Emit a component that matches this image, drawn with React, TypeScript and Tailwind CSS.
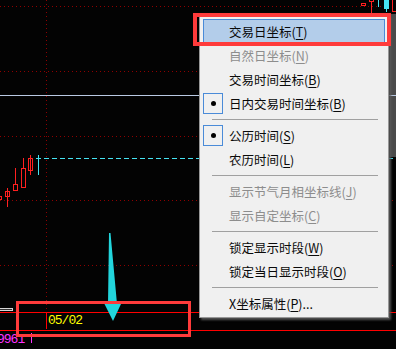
import React from 'react';

type MenuEntry =
  | { sep: true }
  | { sep?: false; label: string; key: string; tail?: string; disabled?: boolean; checked?: boolean; active?: boolean };

const entries: MenuEntry[] = [
  { label: '交易日坐标', key: 'T', active: true },
  { label: '自然日坐标', key: 'N', disabled: true },
  { label: '交易时间坐标', key: 'B' },
  { label: '日内交易时间坐标', key: 'B', checked: true },
  { sep: true },
  { label: '公历时间', key: 'S', checked: true },
  { label: '农历时间', key: 'L' },
  { sep: true },
  { label: '显示节气月相坐标线', key: 'J', disabled: true },
  { label: '显示自定坐标', key: 'C', disabled: true },
  { sep: true },
  { label: '锁定显示时段', key: 'W' },
  { label: '锁定当日显示时段', key: 'O' },
  { sep: true },
  { label: 'X坐标属性', key: 'P', tail: '...' },
];

function ChartLines() {
  const dotted = [6.5, 71.5, 136.5, 200.5, 265.5];
  return (
    <svg className="absolute inset-0" width={396} height={349}>
      {dotted.map((y) => (
        <line key={y} x1={0} x2={396} y1={y} y2={y} stroke="#8f0000" strokeDasharray="1 3" />
      ))}
      <line x1={46.5} x2={46.5} y1={0} y2={310} stroke="#8f0000" strokeDasharray="1 3" />

      {/* 右侧灰条 */}
      <rect x={390} y={14} width={6} height={143} fill="#4b4b4b" />

      <line x1={0} x2={396} y1={95.5} y2={95.5} stroke="#b9c9e2" />
      <line x1={36} x2={396} y1={158.5} y2={158.5} stroke="#45e3f2" strokeWidth={1} strokeDasharray="5 3" />
      <line x1={38.5} x2={38.5} y1={155} y2={175} stroke="#45e3f2" />

      {/* K线 */}
      <g stroke="#ff2020" fill="none">
        <rect x={-2.5} y={196.5} width={4} height={3} />
        <line x1={7.5} x2={7.5} y1={188} y2={207} />
        <rect x={5.5} y={191.5} width={4} height={5} />
        <line x1={15.5} x2={15.5} y1={168} y2={184} />
        <rect x={13.5} y={184.5} width={4} height={6} />
        <line x1={23.5} x2={23.5} y1={158} y2={168} />
        <rect x={21.5} y={168.5} width={4} height={19} />
        <line x1={30.5} x2={30.5} y1={155} y2={175} />
        <rect x={28.5} y={158.5} width={4} height={12} />

        <rect x={361.5} y={3.5} width={4} height={2} />
        <line x1={371.5} x2={371.5} y1={2} y2={14} />
        <rect x={369.5} y={-1.5} width={4} height={3} />
        <rect x={392.5} y={-1.5} width={5} height={13} />
      </g>
      <line x1={378.5} x2={378.5} y1={0} y2={7} stroke="#45e3f2" />
      <line x1={386.5} x2={386.5} y1={0} y2={12} stroke="#45e3f2" />
      <rect x={384} y={0} width={5} height={9} fill="#45e3f2" />

      {/* 底部坐标 */}
      <line x1={0} x2={396} y1={312.5} y2={312.5} stroke="#ff0000" />
      <line x1={0} x2={396} y1={330.5} y2={330.5} stroke="#ff0000" />
      <line x1={46.5} x2={46.5} y1={313} y2={329} stroke="#ff0000" />
      <rect x={-1.5} y={308.5} width={14} height={2} fill="#303030" stroke="#d6d6d6" />
      <line x1={31.5} x2={31.5} y1={333} y2={343} stroke="#ff33ff" />
      <line x1={29} x2={34} y1={335.5} y2={335.5} stroke="#ff33ff" />

      {/* 箭头 */}
      <polygon points="109,233 110.5,233 117,304 121,304 113,321 104.5,304 108,304" fill="#22d5dc" />
    </svg>
  );
}

function ContextMenu() {
  return (
    <div className="absolute left-[199px] top-[15px] w-[190px] bg-[#f0f0f0] border border-[#979797] pt-[3px] pb-[2px] shadow-[2px_2px_2px_rgba(90,90,90,0.9)] font-['Noto_Sans_CJK_SC',sans-serif] text-[12.5px] leading-none tracking-normal">
      {entries.map((e, i) =>
        e.sep ? (
          <div key={i} className="h-[8px] pt-[4px] pl-[12px] pr-[10px]">
            <div className="border-t border-[#a0a0a0]" />
          </div>
        ) : (
          <div
            key={i}
            className={`relative mx-[3px] h-[24px] flex items-center pl-[25px] border ${
              e.active ? 'bg-[#b3cdea] border-[#4a8bd8]' : 'border-transparent'
            } ${e.disabled ? 'text-[#8d8d8d]' : 'text-[#0a0a0a]'}`}
          >
            {e.checked && (
              <div className="absolute left-[-1px] top-px w-[20px] h-[21px] border border-[#4a8bd8] flex items-center justify-center">
                <div className="w-[5px] h-[5px] rounded-full bg-black" />
              </div>
            )}
            <span className="pt-[2px]">
              {e.label}(<span className="underline underline-offset-2">{e.key}</span>){e.tail}
            </span>
          </div>
        )
      )}
    </div>
  );
}

export default function App() {
  return (
    <div className="relative w-[396px] h-[349px] bg-[#030303] overflow-hidden font-['Liberation_Mono',monospace] text-[13px] leading-[16px] tracking-[-1px]">
      <ChartLines />

      <div className="absolute left-[48px] top-[313px] text-[#ffff00]">05/02</div>
      <div className="absolute left-[-3px] top-[332px] text-[#ff33ff]">9961</div>

      <ContextMenu />

      {/* 标注框 */}
      <div className="absolute left-[193px] top-[13px] w-[198px] h-[33px] border-[4px] border-[#ff3b3b]" />
      <div className="absolute left-[16px] top-[301px] w-[175px] h-[36px] border-[3px] border-[#ff3b3b]" />
    </div>
  );
}
